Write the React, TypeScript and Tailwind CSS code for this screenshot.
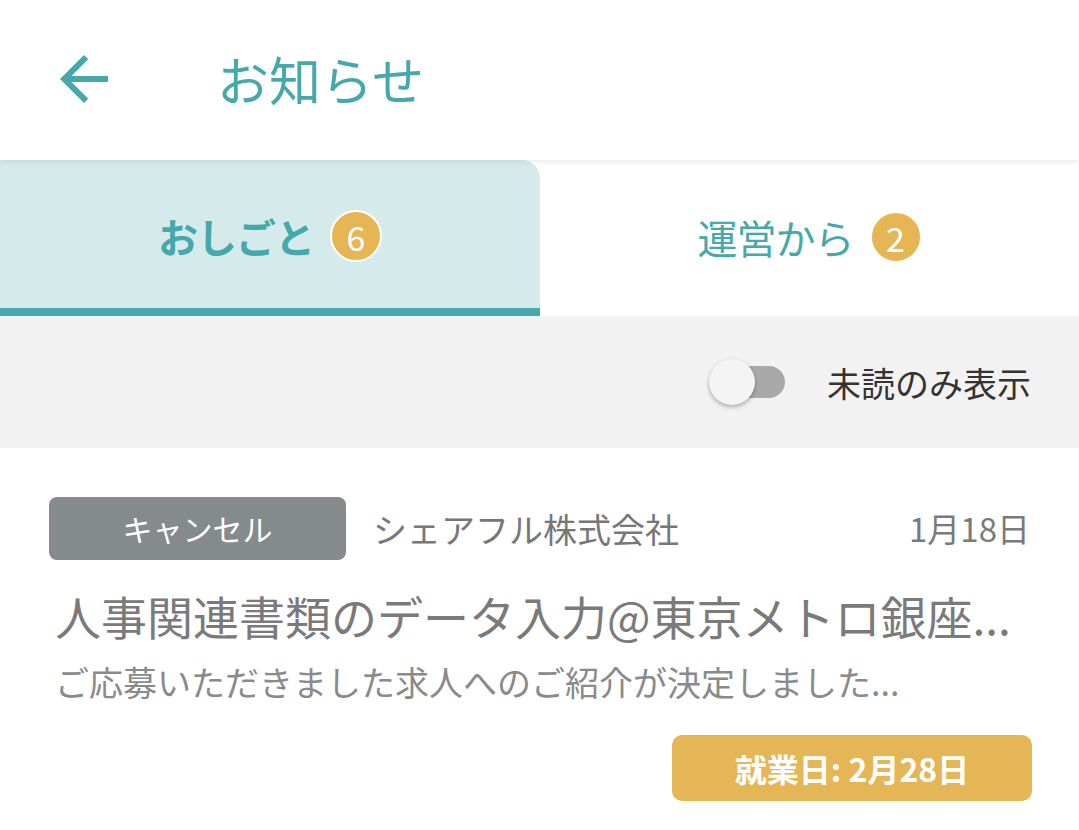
const jp = { fontFamily: '"Noto Sans CJK JP", "Noto Sans", sans-serif' };

function Badge({ n }: { n: number }) {
  return (
    <span className="ml-4 flex h-[52px] w-[52px] items-center justify-center rounded-full border-2 border-white bg-[#e6b655] text-[34px] font-normal text-white">
      {n}
    </span>
  );
}

export default function App() {
  return (
    <div className="min-h-screen w-[1079px] bg-white" style={jp}>
      {/* Header */}
      <div className="relative z-10 flex h-[160px] items-center bg-white shadow-[0_2px_6px_rgba(0,0,0,0.08)]">
        <svg width="72" height="72" viewBox="0 0 24 24" className="ml-[48px] mt-[-2px]" fill="#45a8ab">
          <path d="M20 11H7.83l5.59-5.59L12 4l-8 8 8 8 1.41-1.41L7.83 13H20v-2z" />
        </svg>
        <h1 className="ml-[97px] mt-[-2px] text-[52px] font-normal text-[#45a8ab]">お知らせ</h1>
      </div>

      {/* Tabs */}
      <div className="flex h-[156px]">
        <div className="flex w-[540px] flex-col rounded-tr-[18px] bg-[#d5ebeb]">
          <div className="flex flex-1 items-center justify-center pt-[4px]">
            <span className="text-[40px] font-bold tracking-[-1px] text-[#45a8ab]">おしごと</span>
            <Badge n={6} />
          </div>
          <div className="h-[8px] bg-[#45a9ad]" />
        </div>
        <div className="flex flex-1 items-center justify-center pb-[2px]">
          <span className="text-[40px] font-normal tracking-[-1px] text-[#45a8ab]">運営から</span>
          <Badge n={2} />
        </div>
      </div>

      {/* Filter */}
      <div className="flex h-[132px] items-center justify-end bg-[#f2f2f2] pr-[48px]">
        <div className="relative mr-[42px] h-[32px] w-[74px]">
          <div className="absolute right-0 top-0 h-[32px] w-[70px] rounded-full bg-[#a9a9a9]" />
          <div className="absolute left-[-2px] top-[-7px] h-[46px] w-[46px] rounded-full bg-[#f4f4f4] shadow-[0_2px_4px_rgba(0,0,0,0.3)]" />
        </div>
        <span className="text-[34px] text-[#333333]">未読のみ表示</span>
      </div>

      {/* Card */}
      <div className="pl-[49px] pr-[47px] pt-[49px]">
        <div className="flex items-center">
          <span className="flex h-[63px] w-[297px] items-center justify-center rounded-[8px] bg-[#858a8c] text-[30px] text-white">
            キャンセル
          </span>
          <span className="ml-[27px] text-[34px] text-[#777777]">シェアフル株式会社</span>
          <span className="ml-auto mr-[2px] text-[33px] text-[#7a7a7a]">1月18日</span>
        </div>
        <p className="mt-[22px] overflow-hidden whitespace-nowrap pl-[6px] text-[46px] leading-[66px] text-[#7a7a7a]">
          人事関連書類のデータ入力@東京メトロ銀座...
        </p>
        <p className="mt-[10px] pl-[6px] text-[34px] leading-[48px] text-[#8a8a8a]">
          ご応募いただきました求人へのご紹介が決定しました...
        </p>
        <div className="mt-[29px] flex justify-end">
          <span className="flex h-[66px] w-[360px] items-center justify-center rounded-[10px] bg-[#e5b656] text-[32px] font-bold text-white">
            就業日: 2月28日
          </span>
        </div>
      </div>
    </div>
  );
}
